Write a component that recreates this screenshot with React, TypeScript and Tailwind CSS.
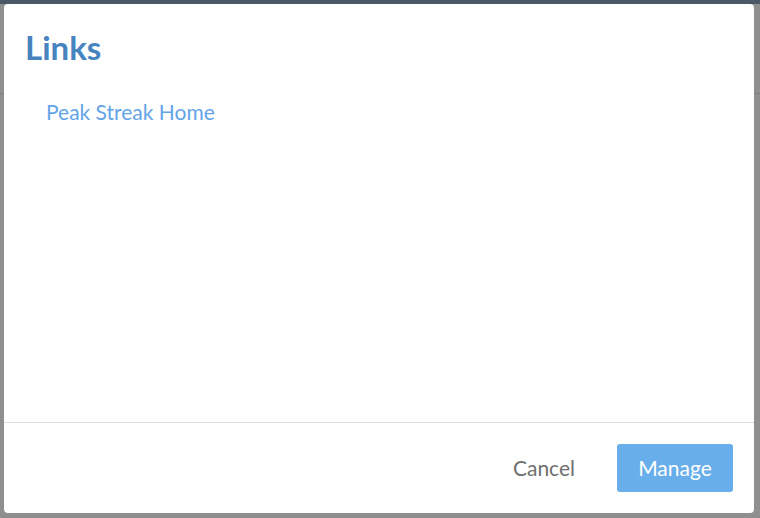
import React from "react";

export default function App() {
  return (
    <div
      className="relative w-[760px] h-[518px] overflow-hidden bg-[#8f8f8f]"
      style={{ fontFamily: "Lato, 'Open Sans', sans-serif" }}
    >
      {/* dimmed page behind */}
      <div className="flex flex-col">
        <div className="h-[4px] bg-[#4b5967]" />
        <div className="h-[90px] border-b border-[#808080]" />
      </div>

      {/* modal */}
      <div className="absolute left-[4px] top-[4px] w-[750px] h-[509px] bg-white rounded-[4px] flex flex-col">
        <div className="pl-[21px] pt-[24px]">
          <h1 className="text-[33px] leading-[1.2] font-bold text-[#4683bf]">Links</h1>
        </div>
        <div className="flex-1 pl-[42px] pt-[31px]">
          <a className="text-[21px] leading-[1.2] text-[#63a4e8]">Peak Streak Home</a>
        </div>
        <div className="h-[91px] border-t border-[#dedede] flex items-center justify-end pr-[21px]">
          <button className="text-[21px] leading-[1.2] text-[#6f6f6f] mr-[42px]">Cancel</button>
          <button className="w-[116px] h-[48px] rounded-[3px] bg-[#68aeea] text-white text-[21px] leading-[1.2]">
            Manage
          </button>
        </div>
      </div>
    </div>
  );
}
